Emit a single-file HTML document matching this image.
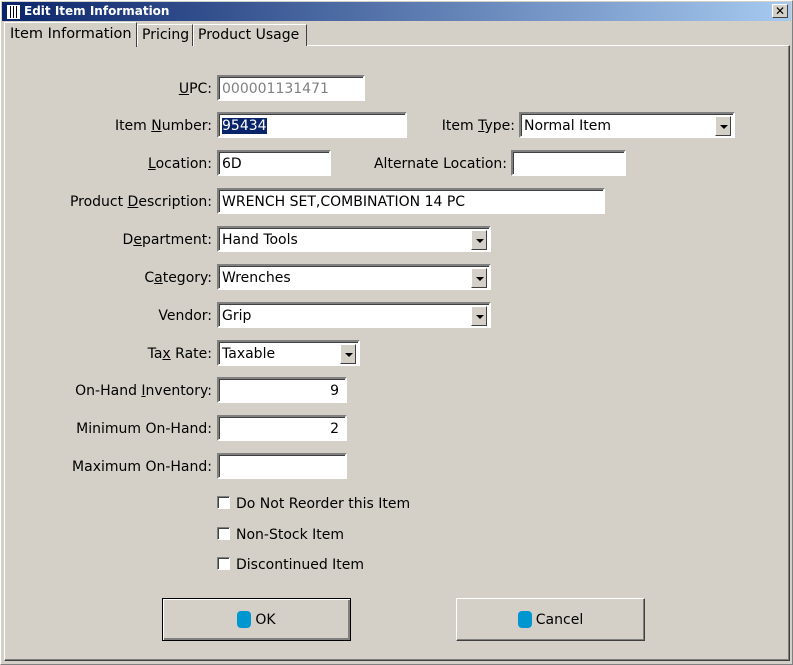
<!DOCTYPE html>
<html><head><meta charset="utf-8"><style>
*{box-sizing:border-box;margin:0;padding:0}
body{width:793px;height:665px;background:#d4d0c8;font-family:Tahoma,"DejaVu Sans","Liberation Sans",sans-serif;font-size:13.5px;color:#000;position:relative;overflow:hidden}
.win{position:absolute;left:0;top:0;width:793px;height:665px;border:1px solid #808080;border-left-color:#fff;border-top-color:#fff}
.title{position:absolute;left:2px;top:2px;width:789px;height:19px;background:linear-gradient(90deg,#0a246a,#a6caf0);color:#fff;font-weight:bold;font-size:12px;line-height:19px;padding-left:22px;font-family:"DejaVu Sans",sans-serif}
.ico{position:absolute;left:5px;top:3px;width:13px;height:14px;background:repeating-linear-gradient(90deg,#fff 0 2px,#000 2px 3px);border:1px solid #fff}
.close{position:absolute;left:772px;top:4px;width:16px;height:14px;background:#d4d0c8;border:1px solid;border-color:#fff #404040 #404040 #fff;font-size:12px;line-height:12px;text-align:center;color:#000;font-weight:bold}
.panel{position:absolute;left:4px;top:45px;width:786px;height:616px;border:1px solid;border-color:#fff #404040 #404040 #fff;box-shadow:inset -1px -1px #808080}
.tab{position:absolute;height:22px;border:1px solid;border-bottom:none;border-color:#fff #404040 #fff #fff;background:#d4d0c8;padding:0 4px;line-height:21px;font-size:14px;white-space:nowrap;overflow:hidden}
.lbl{position:absolute;text-align:right;white-space:nowrap;font-size:14px;line-height:16px;margin-top:1px}
.in{position:absolute;height:26px;background:#fff;border:2px solid;border-color:#808080 #fff #fff #808080;box-shadow:inset 1px 1px #404040;padding:4px 0 0 3px;font-size:14px;line-height:17px;white-space:nowrap;overflow:hidden}
.r{text-align:right;padding-right:6px}
.dd{position:absolute;right:2px;top:2px;width:16px;height:20px;background:#d4d0c8;border:1px solid;border-color:#fff #404040 #404040 #fff}
.dd:after{content:"";position:absolute;left:4px;top:8px;border-left:4px solid transparent;border-right:4px solid transparent;border-top:4px solid #000}
.cb{position:absolute;left:217px;width:13px;height:13px;background:#fff;border:1px solid;border-color:#808080 #fff #fff #808080;box-shadow:inset 1px 1px #404040}
.ct{position:absolute;left:236px;font-size:14px;line-height:16px;margin-top:1px}
.btn{position:absolute;top:598px;width:189px;height:43px;border:1px solid;border-color:#fff #404040 #404040 #fff;box-shadow:inset -1px -1px #808080;text-align:center;line-height:43px;font-size:14px}
.btn.def{border:1px solid #000;box-shadow:inset 1px 1px #fff,inset -2px -2px #808080}
.dot{display:inline-block;width:14px;height:17px;background:#0096d0;border-radius:4px;vertical-align:-4px;margin-right:4px}
u{text-decoration:underline}
</style></head><body>
<div class="win"></div>
<div class="title"><div class="ico"></div>Edit Item Information</div>
<div class="close">✕</div>
<div class="panel"></div>
<div class="tab" style="left:137px;top:24px;width:56px">Pricing</div>
<div class="tab" style="left:193px;top:24px;width:114px">Product Usage</div>
<div class="tab" style="left:4px;top:22px;height:25px;width:133px;line-height:22px;font-size:14.5px;padding:0 5px">Item Information</div>

<div class="lbl" style="right:581px;top:80px"><u>U</u>PC:</div>
<div class="in" style="left:217px;top:75px;width:148px;color:#808080">000001131471</div>

<div class="lbl" style="right:581px;top:117px">Item <u>N</u>umber:</div>
<div class="in" style="left:217px;top:112px;width:190px"><span style="background:#0a246a;color:#fff">95434</span></div>
<div class="lbl" style="right:278px;top:117px">Item <u>T</u>ype:</div>
<div class="in" style="left:519px;top:112px;width:216px">Normal Item<div class="dd"></div></div>

<div class="lbl" style="right:581px;top:155px"><u>L</u>ocation:</div>
<div class="in" style="left:217px;top:150px;width:114px">6D</div>
<div class="lbl" style="right:286px;top:155px">Alternate Location:</div>
<div class="in" style="left:511px;top:150px;width:115px"></div>

<div class="lbl" style="right:581px;top:193px">Product <u>D</u>escription:</div>
<div class="in" style="left:217px;top:188px;width:388px">WRENCH SET,COMBINATION 14 PC</div>

<div class="lbl" style="right:581px;top:231px">D<u>e</u>partment:</div>
<div class="in" style="left:217px;top:226px;width:274px">Hand Tools<div class="dd"></div></div>

<div class="lbl" style="right:581px;top:269px">C<u>a</u>tegory:</div>
<div class="in" style="left:217px;top:264px;width:274px">Wrenches<div class="dd"></div></div>

<div class="lbl" style="right:581px;top:307px">Vendor:</div>
<div class="in" style="left:217px;top:302px;width:274px">Grip<div class="dd"></div></div>

<div class="lbl" style="right:581px;top:345px">Ta<u>x</u> Rate:</div>
<div class="in" style="left:217px;top:340px;width:143px">Taxable<div class="dd"></div></div>

<div class="lbl" style="right:581px;top:382px">On-Hand <u>I</u>nventory:</div>
<div class="in r" style="left:217px;top:377px;width:130px">9</div>

<div class="lbl" style="right:581px;top:420px">Minimum On-Hand:</div>
<div class="in r" style="left:217px;top:415px;width:130px">2</div>

<div class="lbl" style="right:581px;top:458px">Maximum On-Hand:</div>
<div class="in" style="left:217px;top:453px;width:130px"></div>

<div class="cb" style="top:496px"></div><div class="ct" style="top:495px">Do Not Reorder this Item</div>
<div class="cb" style="top:527px"></div><div class="ct" style="top:526px">Non-Stock Item</div>
<div class="cb" style="top:557px"></div><div class="ct" style="top:556px">Discontinued Item</div>

<div class="btn def" style="left:162px"><span class="dot"></span>OK</div>
<div class="btn" style="left:456px"><span class="dot"></span>Cancel</div>
</body></html>
